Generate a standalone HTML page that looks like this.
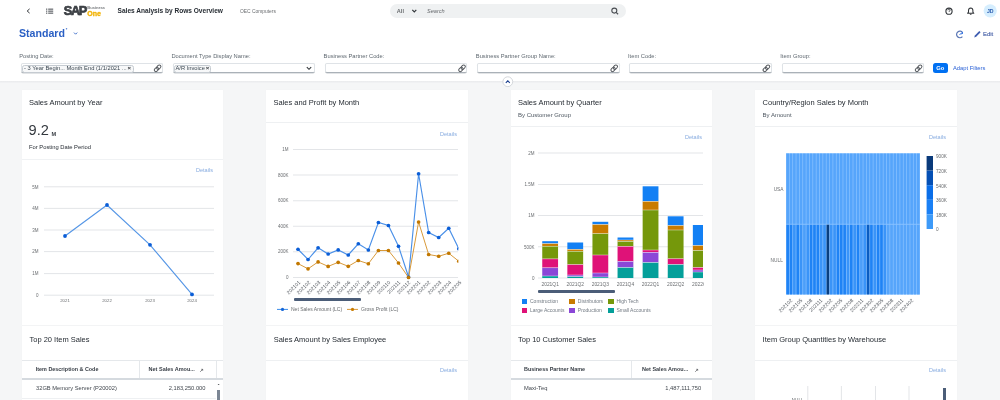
<!DOCTYPE html><html><head><meta charset="utf-8"><style>
html,body{margin:0;padding:0;width:1000px;height:400px;overflow:hidden;background:#f5f6f7;font-family:"Liberation Sans",sans-serif;}
.t{position:absolute;line-height:1;white-space:nowrap;}
svg{position:absolute;left:0;top:0;overflow:visible}
#w{position:absolute;left:0;top:0;width:1000px;height:400px;overflow:hidden;filter:blur(0.45px);background:#f5f6f7}
</style></head><body><div id="w">
<div style="position:absolute;left:0.00px;top:0.00px;width:1000.00px;height:80.50px;background:#fff"></div>
<div style="position:absolute;left:0.00px;top:80.50px;width:1000.00px;height:2.00px;background:linear-gradient(#e9eaec,#f2f3f5)"></div>
<svg width="1000" height="400">
<path d="M29.6 8.9 L27.2 11 L29.6 13.1" fill="none" stroke="#32363a" stroke-width="1.0"/>
<rect x="46" y="8.6" width="1.3" height="1.1" fill="#55595e"/>
<rect x="46" y="10.6" width="1.3" height="1.1" fill="#55595e"/>
<rect x="46" y="12.6" width="1.3" height="1.1" fill="#55595e"/>
<rect x="48.2" y="8.6" width="5" height="1.1" fill="#55595e"/>
<rect x="48.2" y="10.6" width="5" height="1.1" fill="#55595e"/>
<rect x="48.2" y="12.6" width="5" height="1.1" fill="#55595e"/>
</svg>
<div class="t" style="left:63.80px;top:5.24px;font-size:12.8px;color:#3d4146;font-weight:700;letter-spacing:-1.4px;-webkit-text-stroke:0.7px #3d4146;">SAP</div>
<div class="t" style="left:87.30px;top:6.07px;font-size:4.1px;color:#7a7d80;font-weight:700;letter-spacing:-0.05px;">Business</div>
<div class="t" style="left:87.20px;top:9.86px;font-size:7.0px;color:#f2b200;font-weight:700;-webkit-text-stroke:0.3px #f2b200;">One</div>
<div class="t" style="left:117.60px;top:8.39px;font-size:6.55px;color:#262c33;font-weight:700;">Sales Analysis by Rows Overview</div>
<div class="t" style="left:240.00px;top:10.05px;font-size:4.9px;color:#6a6d70;font-weight:400;">OEC Computers</div>
<div style="position:absolute;left:390.40px;top:3.60px;width:235.20px;height:14.60px;background:#eff1f2;border-radius:8px"></div>
<div class="t" style="left:396.80px;top:8.99px;font-size:5.6px;color:#6a6d70;font-weight:700;">All</div>
<svg width="1000" height="400"><path d="M412.3 9.9 L414.3 11.9 L416.3 9.9" fill="none" stroke="#32363a" stroke-width="1.2"/></svg>
<div class="t" style="left:427.00px;top:9.09px;font-size:5.6px;color:#6a6d70;font-weight:400;font-style:italic;">Search</div>
<svg width="1000" height="400"><circle cx="614.3" cy="10.6" r="2.5" fill="none" stroke="#4a4e53" stroke-width="1.1"/><path d="M616.1 12.4 L618.1 14.3" stroke="#4a4e53" stroke-width="1.2"/></svg>
<svg width="1000" height="400">
<circle cx="949" cy="11.2" r="3.1" fill="none" stroke="#32363a" stroke-width="1.1"/>
<path d="M947.9 10.3 Q948 9.1 949.1 9.1 Q950.2 9.2 950.1 10.2 Q950 11 949.1 11.4 L949.1 12" fill="none" stroke="#32363a" stroke-width="0.8"/>
<path d="M967.6 13.3 L968.5 12.2 L968.5 10.6 Q968.6 8 970.7 7.9 Q972.8 8 972.9 10.6 L972.9 12.2 L973.8 13.3 Z" fill="none" stroke="#32363a" stroke-width="1.05" stroke-linejoin="round"/><path d="M969.9 14.3 L971.5 14.3" stroke="#32363a" stroke-width="0.9"/>
<circle cx="990.2" cy="10.8" r="6.6" fill="#d6eefe"/>
</svg>
<div class="t" style="left:890.30px;width:200px;text-align:center;top:8.90px;font-size:5.2px;color:#2a5cb0;font-weight:700;">JD</div>
<div class="t" style="left:19.00px;top:28.49px;font-size:10.6px;color:#2a5fc4;font-weight:700;">Standard</div>
<div class="t" style="left:65.80px;top:28.12px;font-size:4px;color:#2a5fc4;font-weight:700;">*</div>
<svg width="1000" height="400"><path d="M74 32.6 L75.6 34.2 L77.2 32.6" fill="none" stroke="#2a5fc4" stroke-width="0.9"/></svg>
<svg width="1000" height="400">
<path d="M962.4 36.6 A3.3 3.3 0 1 1 962.6 32.6" fill="none" stroke="#5a76b4" stroke-width="1.2"/>
<path d="M959.6 35 Q960.2 33 962.8 33 M961.6 31.8 L963 33 L961.6 34.2" fill="none" stroke="#2f6fe0" stroke-width="0.9"/>
<path d="M974.2 37.4 L974.9 35.4 L979.3 31 L980.6 32.3 L976.2 36.7 Z" fill="#3d5cb0"/>
</svg>
<div class="t" style="left:983.00px;top:31.93px;font-size:5.9px;color:#5870b0;font-weight:400;-webkit-text-stroke:0.2px #5870b0;">Edit</div>
<div class="t" style="left:19.20px;top:54.01px;font-size:5.75px;color:#5f6870;font-weight:400;">Posting Date:</div>
<div style="position:absolute;left:20.60px;top:63.30px;width:142.40px;height:10.20px;background:#fff;border:0.6px solid #dfe3e7;border-bottom:1px solid #aab1b8;box-sizing:border-box;border-radius:2px;box-shadow:0 0.6px 0.6px #c5cace"></div>
<svg width="1000" height="400"><g fill="none" stroke="#55595e" stroke-width="1" transform="rotate(-45 157.6 68.3)"><rect x="153.6" y="66.7" width="4.8" height="3.2" rx="1.6"/><rect x="156.8" y="66.7" width="4.8" height="3.2" rx="1.6"/></g></svg>
<div class="t" style="left:171.40px;top:54.01px;font-size:5.75px;color:#5f6870;font-weight:400;">Document Type Display Name:</div>
<div style="position:absolute;left:172.80px;top:63.30px;width:142.40px;height:10.20px;background:#fff;border:0.6px solid #dfe3e7;border-bottom:1px solid #aab1b8;box-sizing:border-box;border-radius:2px;box-shadow:0 0.6px 0.6px #c5cace"></div>
<svg width="1000" height="400"><path d="M306.8 67.2 L309.0 69.3 L311.2 67.2" fill="none" stroke="#32363a" stroke-width="1.1"/></svg>
<div class="t" style="left:323.60px;top:54.01px;font-size:5.75px;color:#5f6870;font-weight:400;">Business Partner Code:</div>
<div style="position:absolute;left:325.00px;top:63.30px;width:142.40px;height:10.20px;background:#fff;border:0.6px solid #dfe3e7;border-bottom:1px solid #aab1b8;box-sizing:border-box;border-radius:2px;box-shadow:0 0.6px 0.6px #c5cace"></div>
<svg width="1000" height="400"><g fill="none" stroke="#55595e" stroke-width="1" transform="rotate(-45 462.0 68.3)"><rect x="458.0" y="66.7" width="4.8" height="3.2" rx="1.6"/><rect x="461.2" y="66.7" width="4.8" height="3.2" rx="1.6"/></g></svg>
<div class="t" style="left:475.80px;top:54.01px;font-size:5.75px;color:#5f6870;font-weight:400;">Business Partner Group Name:</div>
<div style="position:absolute;left:477.20px;top:63.30px;width:142.40px;height:10.20px;background:#fff;border:0.6px solid #dfe3e7;border-bottom:1px solid #aab1b8;box-sizing:border-box;border-radius:2px;box-shadow:0 0.6px 0.6px #c5cace"></div>
<svg width="1000" height="400"><g fill="none" stroke="#55595e" stroke-width="1" transform="rotate(-45 614.2 68.3)"><rect x="610.2" y="66.7" width="4.8" height="3.2" rx="1.6"/><rect x="613.4" y="66.7" width="4.8" height="3.2" rx="1.6"/></g></svg>
<div class="t" style="left:628.00px;top:54.01px;font-size:5.75px;color:#5f6870;font-weight:400;">Item Code:</div>
<div style="position:absolute;left:629.40px;top:63.30px;width:142.40px;height:10.20px;background:#fff;border:0.6px solid #dfe3e7;border-bottom:1px solid #aab1b8;box-sizing:border-box;border-radius:2px;box-shadow:0 0.6px 0.6px #c5cace"></div>
<svg width="1000" height="400"><g fill="none" stroke="#55595e" stroke-width="1" transform="rotate(-45 766.4 68.3)"><rect x="762.4" y="66.7" width="4.8" height="3.2" rx="1.6"/><rect x="765.6" y="66.7" width="4.8" height="3.2" rx="1.6"/></g></svg>
<div class="t" style="left:780.20px;top:54.01px;font-size:5.75px;color:#5f6870;font-weight:400;">Item Group:</div>
<div style="position:absolute;left:781.60px;top:63.30px;width:142.40px;height:10.20px;background:#fff;border:0.6px solid #dfe3e7;border-bottom:1px solid #aab1b8;box-sizing:border-box;border-radius:2px;box-shadow:0 0.6px 0.6px #c5cace"></div>
<svg width="1000" height="400"><g fill="none" stroke="#55595e" stroke-width="1" transform="rotate(-45 918.6 68.3)"><rect x="914.6" y="66.7" width="4.8" height="3.2" rx="1.6"/><rect x="917.8" y="66.7" width="4.8" height="3.2" rx="1.6"/></g></svg>
<div style="position:absolute;left:22.20px;top:64.60px;width:112.00px;height:8.00px;background:#f7f8f9;border:0.7px solid #c5cbd1;box-sizing:border-box;border-radius:2.5px"></div>
<div class="t" style="left:24.00px;top:65.61px;font-size:5.75px;color:#3b4650;font-weight:400;">- 3 Year Begin... Month End (1/1/2021 ...</div>
<div class="t" style="left:29.30px;width:200px;text-align:center;top:65.38px;font-size:6px;color:#32363a;font-weight:700;">×</div>
<div style="position:absolute;left:174.20px;top:64.60px;width:37.30px;height:8.00px;background:#f7f8f9;border:0.7px solid #c5cbd1;box-sizing:border-box;border-radius:2.5px"></div>
<div class="t" style="left:175.50px;top:65.61px;font-size:5.75px;color:#3b4650;font-weight:400;">A/R Invoice</div>
<div class="t" style="left:107.60px;width:200px;text-align:center;top:65.38px;font-size:6px;color:#32363a;font-weight:700;">×</div>
<div style="position:absolute;left:933.00px;top:63.20px;width:14.60px;height:10.20px;background:#0070f2;border-radius:2.5px"></div>
<div class="t" style="left:840.30px;width:200px;text-align:center;top:65.98px;font-size:5.8px;color:#fff;font-weight:700;">Go</div>
<div class="t" style="left:953.00px;top:66.00px;font-size:5.77px;color:#2b62d6;font-weight:400;">Adapt Filters</div>
<svg width="1000" height="400"><circle cx="507.8" cy="81.7" r="4.9" fill="#fff" stroke="#cfd3d7" stroke-width="0.9"/><path d="M505.8 82.8 L507.8 80.8 L509.8 82.8" fill="none" stroke="#1b3f8f" stroke-width="1.1"/></svg>
<div style="position:absolute;left:22.00px;top:90.00px;width:201.00px;height:234.60px;background:#fff;box-shadow:0 0 0.6px rgba(0,0,0,0.10)"></div>
<div style="position:absolute;left:22.00px;top:326.30px;width:201.00px;height:93.70px;background:#fff;box-shadow:0 0 0.6px rgba(0,0,0,0.10)"></div>
<div style="position:absolute;left:266.00px;top:90.00px;width:202.00px;height:234.60px;background:#fff;box-shadow:0 0 0.6px rgba(0,0,0,0.10)"></div>
<div style="position:absolute;left:266.00px;top:326.30px;width:202.00px;height:93.70px;background:#fff;box-shadow:0 0 0.6px rgba(0,0,0,0.10)"></div>
<div style="position:absolute;left:511.00px;top:90.00px;width:201.00px;height:234.60px;background:#fff;box-shadow:0 0 0.6px rgba(0,0,0,0.10)"></div>
<div style="position:absolute;left:511.00px;top:326.30px;width:201.00px;height:93.70px;background:#fff;box-shadow:0 0 0.6px rgba(0,0,0,0.10)"></div>
<div style="position:absolute;left:755.00px;top:90.00px;width:202.00px;height:234.60px;background:#fff;box-shadow:0 0 0.6px rgba(0,0,0,0.10)"></div>
<div style="position:absolute;left:755.00px;top:326.30px;width:202.00px;height:93.70px;background:#fff;box-shadow:0 0 0.6px rgba(0,0,0,0.10)"></div>
<div class="t" style="left:29.00px;top:99.40px;font-size:7.5px;color:#262c33;font-weight:400;">Sales Amount by Year</div>
<div class="t" style="left:28.60px;top:123.31px;font-size:14.6px;color:#33383e;font-weight:400;">9.2</div>
<div class="t" style="left:51.40px;top:132.09px;font-size:5.6px;color:#3a3f45;font-weight:700;">M</div>
<div class="t" style="left:29.00px;top:144.98px;font-size:5.8px;color:#262c33;font-weight:400;">For Posting Date Period</div>
<div style="position:absolute;left:22.00px;top:159.20px;width:201.00px;height:1.00px;background:#f0f2f4"></div>
<div class="t" style="right:787.00px;top:168.09px;font-size:5.6px;color:#88ace0;font-weight:400;">Details</div>
<svg width="1000" height="400"><line x1="44" y1="186.8" x2="214" y2="186.8" stroke="#e2e4e7" stroke-width="0.95"/><line x1="44" y1="208.4" x2="214" y2="208.4" stroke="#e2e4e7" stroke-width="0.95"/><line x1="44" y1="230" x2="214" y2="230" stroke="#e2e4e7" stroke-width="0.95"/><line x1="44" y1="251.6" x2="214" y2="251.6" stroke="#e2e4e7" stroke-width="0.95"/><line x1="44" y1="273.6" x2="214" y2="273.6" stroke="#e2e4e7" stroke-width="0.95"/><line x1="44" y1="295.2" x2="214" y2="295.2" stroke="#e2e4e7" stroke-width="0.95"/></svg>
<div class="t" style="right:961.50px;top:185.66px;font-size:4.5px;color:#6a6d70;font-weight:400;">5M</div>
<div class="t" style="right:961.50px;top:207.26px;font-size:4.5px;color:#6a6d70;font-weight:400;">4M</div>
<div class="t" style="right:961.50px;top:228.86px;font-size:4.5px;color:#6a6d70;font-weight:400;">3M</div>
<div class="t" style="right:961.50px;top:250.46px;font-size:4.5px;color:#6a6d70;font-weight:400;">2M</div>
<div class="t" style="right:961.50px;top:272.46px;font-size:4.5px;color:#6a6d70;font-weight:400;">1M</div>
<div class="t" style="right:961.50px;top:294.06px;font-size:4.5px;color:#6a6d70;font-weight:400;">0</div>
<div class="t" style="left:-35.00px;width:200px;text-align:center;top:298.56px;font-size:4.3px;color:#6a6d70;font-weight:400;">2021</div>
<div class="t" style="left:7.00px;width:200px;text-align:center;top:298.56px;font-size:4.3px;color:#6a6d70;font-weight:400;">2022</div>
<div class="t" style="left:50.00px;width:200px;text-align:center;top:298.56px;font-size:4.3px;color:#6a6d70;font-weight:400;">2023</div>
<div class="t" style="left:92.00px;width:200px;text-align:center;top:298.56px;font-size:4.3px;color:#6a6d70;font-weight:400;">2024</div>
<svg width="1000" height="400"><polyline points="65,236 107,205 150,244.8 192,294.4" fill="none" stroke="#5596e6" stroke-width="1.15"/><circle cx="65" cy="236" r="1.9" fill="#0b5ed7"/><circle cx="107" cy="205" r="1.9" fill="#0b5ed7"/><circle cx="150" cy="244.8" r="1.9" fill="#0b5ed7"/><circle cx="192" cy="294.4" r="1.9" fill="#0b5ed7"/></svg>
<div class="t" style="left:273.40px;top:99.10px;font-size:7.5px;color:#262c33;font-weight:400;">Sales and Profit by Month</div>
<div style="position:absolute;left:266.00px;top:121.80px;width:202.00px;height:1.00px;background:#eef0f2"></div>
<div class="t" style="right:543.00px;top:132.09px;font-size:5.6px;color:#88ace0;font-weight:400;">Details</div>
<svg width="1000" height="400"><line x1="293" y1="149.5" x2="458" y2="149.5" stroke="#e2e4e7" stroke-width="0.95"/><line x1="293" y1="175" x2="458" y2="175" stroke="#e2e4e7" stroke-width="0.95"/><line x1="293" y1="200.75" x2="458" y2="200.75" stroke="#e2e4e7" stroke-width="0.95"/><line x1="293" y1="226.25" x2="458" y2="226.25" stroke="#e2e4e7" stroke-width="0.95"/><line x1="293" y1="251.75" x2="458" y2="251.75" stroke="#e2e4e7" stroke-width="0.95"/><line x1="293" y1="277.5" x2="458" y2="277.5" stroke="#e2e4e7" stroke-width="0.95"/></svg>
<div class="t" style="right:711.50px;top:148.16px;font-size:4.5px;color:#6a6d70;font-weight:400;">1M</div>
<div class="t" style="right:711.50px;top:173.66px;font-size:4.5px;color:#6a6d70;font-weight:400;">800K</div>
<div class="t" style="right:711.50px;top:199.41px;font-size:4.5px;color:#6a6d70;font-weight:400;">600K</div>
<div class="t" style="right:711.50px;top:224.91px;font-size:4.5px;color:#6a6d70;font-weight:400;">400K</div>
<div class="t" style="right:711.50px;top:250.41px;font-size:4.5px;color:#6a6d70;font-weight:400;">200K</div>
<div class="t" style="right:711.50px;top:276.16px;font-size:4.5px;color:#6a6d70;font-weight:400;">0</div>
<svg width="1000" height="400"><defs><clipPath id="c2"><rect x="266" y="140" width="192.3" height="150"/></clipPath></defs><g clip-path="url(#c2)"><polyline points="298.00,249.25 308.05,259.5 318.10,247.8 328.15,254 338.20,249.9 348.25,255 358.30,243.75 368.35,250 378.40,222.5 388.45,225.5 398.50,246.25 408.55,277 418.60,173.75 428.65,232.5 438.70,237.5 448.75,228.25 458.80,248.75" fill="none" stroke="#4a90e8" stroke-width="1.15"/><polyline points="298.00,263.6 308.05,268.8 318.10,261.9 328.15,266.4 338.20,262.3 348.25,266.3 358.30,260.5 368.35,263.75 378.40,250.5 388.45,250.5 398.50,263 408.55,277.5 418.60,222 428.65,254.5 438.70,256.25 448.75,253.25 458.80,261.25" fill="none" stroke="#d99a3a" stroke-width="1"/><circle cx="298.00" cy="249.25" r="1.85" fill="#0b5ed7"/><circle cx="308.05" cy="259.5" r="1.85" fill="#0b5ed7"/><circle cx="318.10" cy="247.8" r="1.85" fill="#0b5ed7"/><circle cx="328.15" cy="254" r="1.85" fill="#0b5ed7"/><circle cx="338.20" cy="249.9" r="1.85" fill="#0b5ed7"/><circle cx="348.25" cy="255" r="1.85" fill="#0b5ed7"/><circle cx="358.30" cy="243.75" r="1.85" fill="#0b5ed7"/><circle cx="368.35" cy="250" r="1.85" fill="#0b5ed7"/><circle cx="378.40" cy="222.5" r="1.85" fill="#0b5ed7"/><circle cx="388.45" cy="225.5" r="1.85" fill="#0b5ed7"/><circle cx="398.50" cy="246.25" r="1.85" fill="#0b5ed7"/><circle cx="408.55" cy="277" r="1.85" fill="#0b5ed7"/><circle cx="418.60" cy="173.75" r="1.85" fill="#0b5ed7"/><circle cx="428.65" cy="232.5" r="1.85" fill="#0b5ed7"/><circle cx="438.70" cy="237.5" r="1.85" fill="#0b5ed7"/><circle cx="448.75" cy="228.25" r="1.85" fill="#0b5ed7"/><circle cx="458.80" cy="248.75" r="1.85" fill="#0b5ed7"/><circle cx="298.00" cy="263.6" r="1.85" fill="#c27800"/><circle cx="308.05" cy="268.8" r="1.85" fill="#c27800"/><circle cx="318.10" cy="261.9" r="1.85" fill="#c27800"/><circle cx="328.15" cy="266.4" r="1.85" fill="#c27800"/><circle cx="338.20" cy="262.3" r="1.85" fill="#c27800"/><circle cx="348.25" cy="266.3" r="1.85" fill="#c27800"/><circle cx="358.30" cy="260.5" r="1.85" fill="#c27800"/><circle cx="368.35" cy="263.75" r="1.85" fill="#c27800"/><circle cx="378.40" cy="250.5" r="1.85" fill="#c27800"/><circle cx="388.45" cy="250.5" r="1.85" fill="#c27800"/><circle cx="398.50" cy="263" r="1.85" fill="#c27800"/><circle cx="408.55" cy="277.5" r="1.85" fill="#c27800"/><circle cx="418.60" cy="222" r="1.85" fill="#c27800"/><circle cx="428.65" cy="254.5" r="1.85" fill="#c27800"/><circle cx="438.70" cy="256.25" r="1.85" fill="#c27800"/><circle cx="448.75" cy="253.25" r="1.85" fill="#c27800"/><circle cx="458.80" cy="261.25" r="1.85" fill="#c27800"/></g></svg>
<div class="t" style="left:267.80px;top:280.00px;width:30px;text-align:right;font-size:5.1px;color:#5a5f66;transform-origin:100% 0;transform:rotate(-45deg)">202101</div>
<div class="t" style="left:277.85px;top:280.00px;width:30px;text-align:right;font-size:5.1px;color:#5a5f66;transform-origin:100% 0;transform:rotate(-45deg)">202102</div>
<div class="t" style="left:287.90px;top:280.00px;width:30px;text-align:right;font-size:5.1px;color:#5a5f66;transform-origin:100% 0;transform:rotate(-45deg)">202103</div>
<div class="t" style="left:297.95px;top:280.00px;width:30px;text-align:right;font-size:5.1px;color:#5a5f66;transform-origin:100% 0;transform:rotate(-45deg)">202104</div>
<div class="t" style="left:308.00px;top:280.00px;width:30px;text-align:right;font-size:5.1px;color:#5a5f66;transform-origin:100% 0;transform:rotate(-45deg)">202105</div>
<div class="t" style="left:318.05px;top:280.00px;width:30px;text-align:right;font-size:5.1px;color:#5a5f66;transform-origin:100% 0;transform:rotate(-45deg)">202106</div>
<div class="t" style="left:328.10px;top:280.00px;width:30px;text-align:right;font-size:5.1px;color:#5a5f66;transform-origin:100% 0;transform:rotate(-45deg)">202107</div>
<div class="t" style="left:338.15px;top:280.00px;width:30px;text-align:right;font-size:5.1px;color:#5a5f66;transform-origin:100% 0;transform:rotate(-45deg)">202108</div>
<div class="t" style="left:348.20px;top:280.00px;width:30px;text-align:right;font-size:5.1px;color:#5a5f66;transform-origin:100% 0;transform:rotate(-45deg)">202109</div>
<div class="t" style="left:358.25px;top:280.00px;width:30px;text-align:right;font-size:5.1px;color:#5a5f66;transform-origin:100% 0;transform:rotate(-45deg)">202110</div>
<div class="t" style="left:368.30px;top:280.00px;width:30px;text-align:right;font-size:5.1px;color:#5a5f66;transform-origin:100% 0;transform:rotate(-45deg)">202111</div>
<div class="t" style="left:378.35px;top:280.00px;width:30px;text-align:right;font-size:5.1px;color:#5a5f66;transform-origin:100% 0;transform:rotate(-45deg)">202112</div>
<div class="t" style="left:388.40px;top:280.00px;width:30px;text-align:right;font-size:5.1px;color:#5a5f66;transform-origin:100% 0;transform:rotate(-45deg)">202201</div>
<div class="t" style="left:398.45px;top:280.00px;width:30px;text-align:right;font-size:5.1px;color:#5a5f66;transform-origin:100% 0;transform:rotate(-45deg)">202202</div>
<div class="t" style="left:408.50px;top:280.00px;width:30px;text-align:right;font-size:5.1px;color:#5a5f66;transform-origin:100% 0;transform:rotate(-45deg)">202203</div>
<div class="t" style="left:418.55px;top:280.00px;width:30px;text-align:right;font-size:5.1px;color:#5a5f66;transform-origin:100% 0;transform:rotate(-45deg)">202204</div>
<div class="t" style="left:428.60px;top:280.00px;width:30px;text-align:right;font-size:5.1px;color:#5a5f66;transform-origin:100% 0;transform:rotate(-45deg)">202205</div>
<div style="position:absolute;left:294.30px;top:298.20px;width:67.10px;height:2.60px;background:#4b5d78;border-radius:1px"></div>
<svg width="1000" height="400">
<line x1="277" y1="309.4" x2="288" y2="309.4" stroke="#3b8be8" stroke-width="1"/><circle cx="282.5" cy="309.4" r="1.6" fill="#1466d8"/>
<line x1="347" y1="309.4" x2="358" y2="309.4" stroke="#d99a3a" stroke-width="1"/><circle cx="352.5" cy="309.4" r="1.6" fill="#c87b00"/>
</svg>
<div class="t" style="left:291.00px;top:306.80px;font-size:5.0px;color:#6a6d70;font-weight:400;">Net Sales Amount (LC)</div>
<div class="t" style="left:361.00px;top:306.80px;font-size:5.0px;color:#6a6d70;font-weight:400;">Gross Profit (LC)</div>
<div class="t" style="left:518.00px;top:99.10px;font-size:7.5px;color:#262c33;font-weight:400;">Sales Amount by Quarter</div>
<div class="t" style="left:518.00px;top:112.48px;font-size:6.0px;color:#4f5862;font-weight:400;">By Customer Group</div>
<div style="position:absolute;left:511.00px;top:125.60px;width:201.00px;height:1.00px;background:#eef0f2"></div>
<div class="t" style="right:298.00px;top:135.09px;font-size:5.6px;color:#88ace0;font-weight:400;">Details</div>
<svg width="1000" height="400"><line x1="538" y1="153" x2="703" y2="153" stroke="#e2e4e7" stroke-width="0.95"/><line x1="538" y1="184.5" x2="703" y2="184.5" stroke="#e2e4e7" stroke-width="0.95"/><line x1="538" y1="215.5" x2="703" y2="215.5" stroke="#e2e4e7" stroke-width="0.95"/><line x1="538" y1="246.75" x2="703" y2="246.75" stroke="#e2e4e7" stroke-width="0.95"/><line x1="538" y1="278" x2="703" y2="278" stroke="#e2e4e7" stroke-width="0.95"/></svg>
<div class="t" style="right:465.50px;top:151.86px;font-size:4.5px;color:#6a6d70;font-weight:400;">2M</div>
<div class="t" style="right:465.50px;top:183.36px;font-size:4.5px;color:#6a6d70;font-weight:400;">1.5M</div>
<div class="t" style="right:465.50px;top:214.36px;font-size:4.5px;color:#6a6d70;font-weight:400;">1M</div>
<div class="t" style="right:465.50px;top:245.61px;font-size:4.5px;color:#6a6d70;font-weight:400;">500K</div>
<div class="t" style="right:465.50px;top:276.86px;font-size:4.5px;color:#6a6d70;font-weight:400;">0</div>
<svg width="1000" height="400"><defs><clipPath id="c3"><rect x="511" y="140" width="192" height="150"/></clipPath></defs><g clip-path="url(#c3)"><rect x="542.25" y="241.2" width="15.8" height="2.40" fill="#1380f4"/><rect x="542.25" y="243.6" width="15.8" height="2.60" fill="#c87b00"/><rect x="542.25" y="246.2" width="15.8" height="12.70" fill="#75980b"/><rect x="542.25" y="258.9" width="15.8" height="8.90" fill="#df1278"/><rect x="542.25" y="267.8" width="15.8" height="8.20" fill="#8b47d7"/><rect x="542.25" y="276" width="15.8" height="2.00" fill="#049f9a"/><rect x="542.25" y="243.35" width="15.8" height="0.5" fill="#fff" opacity="0.8"/><rect x="542.25" y="245.95" width="15.8" height="0.5" fill="#fff" opacity="0.8"/><rect x="542.25" y="258.65" width="15.8" height="0.5" fill="#fff" opacity="0.8"/><rect x="542.25" y="267.55" width="15.8" height="0.5" fill="#fff" opacity="0.8"/><rect x="542.25" y="275.75" width="15.8" height="0.5" fill="#fff" opacity="0.8"/><rect x="567.35" y="242.5" width="15.8" height="6.80" fill="#1380f4"/><rect x="567.35" y="249.3" width="15.8" height="1.90" fill="#c87b00"/><rect x="567.35" y="251.2" width="15.8" height="13.40" fill="#75980b"/><rect x="567.35" y="264.6" width="15.8" height="10.40" fill="#df1278"/><rect x="567.35" y="275" width="15.8" height="1.60" fill="#8b47d7"/><rect x="567.35" y="276.6" width="15.8" height="1.40" fill="#049f9a"/><rect x="567.35" y="249.05" width="15.8" height="0.5" fill="#fff" opacity="0.8"/><rect x="567.35" y="250.95" width="15.8" height="0.5" fill="#fff" opacity="0.8"/><rect x="567.35" y="264.35" width="15.8" height="0.5" fill="#fff" opacity="0.8"/><rect x="567.35" y="274.75" width="15.8" height="0.5" fill="#fff" opacity="0.8"/><rect x="567.35" y="276.35" width="15.8" height="0.5" fill="#fff" opacity="0.8"/><rect x="592.45" y="221.8" width="15.8" height="2.70" fill="#1380f4"/><rect x="592.45" y="224.5" width="15.8" height="9.20" fill="#c87b00"/><rect x="592.45" y="233.7" width="15.8" height="21.30" fill="#75980b"/><rect x="592.45" y="255" width="15.8" height="18.00" fill="#df1278"/><rect x="592.45" y="273" width="15.8" height="4.00" fill="#8b47d7"/><rect x="592.45" y="277" width="15.8" height="1.00" fill="#049f9a"/><rect x="592.45" y="224.25" width="15.8" height="0.5" fill="#fff" opacity="0.8"/><rect x="592.45" y="233.45" width="15.8" height="0.5" fill="#fff" opacity="0.8"/><rect x="592.45" y="254.75" width="15.8" height="0.5" fill="#fff" opacity="0.8"/><rect x="592.45" y="272.75" width="15.8" height="0.5" fill="#fff" opacity="0.8"/><rect x="592.45" y="276.75" width="15.8" height="0.5" fill="#fff" opacity="0.8"/><rect x="617.55" y="237.5" width="15.8" height="2.50" fill="#1380f4"/><rect x="617.55" y="240" width="15.8" height="1.30" fill="#c87b00"/><rect x="617.55" y="241.3" width="15.8" height="5.00" fill="#75980b"/><rect x="617.55" y="246.3" width="15.8" height="15.00" fill="#df1278"/><rect x="617.55" y="261.3" width="15.8" height="6.20" fill="#8b47d7"/><rect x="617.55" y="267.5" width="15.8" height="10.50" fill="#049f9a"/><rect x="617.55" y="239.75" width="15.8" height="0.5" fill="#fff" opacity="0.8"/><rect x="617.55" y="241.05" width="15.8" height="0.5" fill="#fff" opacity="0.8"/><rect x="617.55" y="246.05" width="15.8" height="0.5" fill="#fff" opacity="0.8"/><rect x="617.55" y="261.05" width="15.8" height="0.5" fill="#fff" opacity="0.8"/><rect x="617.55" y="267.25" width="15.8" height="0.5" fill="#fff" opacity="0.8"/><rect x="642.65" y="186.3" width="15.8" height="15.00" fill="#1380f4"/><rect x="642.65" y="201.3" width="15.8" height="8.70" fill="#c87b00"/><rect x="642.65" y="210" width="15.8" height="40.00" fill="#75980b"/><rect x="642.65" y="250" width="15.8" height="2.30" fill="#df1278"/><rect x="642.65" y="252.3" width="15.8" height="10.20" fill="#8b47d7"/><rect x="642.65" y="262.5" width="15.8" height="15.50" fill="#049f9a"/><rect x="642.65" y="201.05" width="15.8" height="0.5" fill="#fff" opacity="0.8"/><rect x="642.65" y="209.75" width="15.8" height="0.5" fill="#fff" opacity="0.8"/><rect x="642.65" y="249.75" width="15.8" height="0.5" fill="#fff" opacity="0.8"/><rect x="642.65" y="252.05" width="15.8" height="0.5" fill="#fff" opacity="0.8"/><rect x="642.65" y="262.25" width="15.8" height="0.5" fill="#fff" opacity="0.8"/><rect x="667.75" y="216.3" width="15.8" height="9.20" fill="#1380f4"/><rect x="667.75" y="225.5" width="15.8" height="4.50" fill="#c87b00"/><rect x="667.75" y="230" width="15.8" height="28.80" fill="#75980b"/><rect x="667.75" y="258.8" width="15.8" height="5.70" fill="#df1278"/><rect x="667.75" y="264.5" width="15.8" height="13.50" fill="#049f9a"/><rect x="667.75" y="225.25" width="15.8" height="0.5" fill="#fff" opacity="0.8"/><rect x="667.75" y="229.75" width="15.8" height="0.5" fill="#fff" opacity="0.8"/><rect x="667.75" y="258.55" width="15.8" height="0.5" fill="#fff" opacity="0.8"/><rect x="667.75" y="264.25" width="15.8" height="0.5" fill="#fff" opacity="0.8"/><rect x="692.85" y="225" width="15.8" height="20.50" fill="#1380f4"/><rect x="692.85" y="245.5" width="15.8" height="5.00" fill="#c87b00"/><rect x="692.85" y="250.5" width="15.8" height="17.00" fill="#75980b"/><rect x="692.85" y="267.5" width="15.8" height="2.50" fill="#df1278"/><rect x="692.85" y="270" width="15.8" height="2.00" fill="#8b47d7"/><rect x="692.85" y="272" width="15.8" height="6.00" fill="#049f9a"/><rect x="692.85" y="245.25" width="15.8" height="0.5" fill="#fff" opacity="0.8"/><rect x="692.85" y="250.25" width="15.8" height="0.5" fill="#fff" opacity="0.8"/><rect x="692.85" y="267.25" width="15.8" height="0.5" fill="#fff" opacity="0.8"/><rect x="692.85" y="269.75" width="15.8" height="0.5" fill="#fff" opacity="0.8"/><rect x="692.85" y="271.75" width="15.8" height="0.5" fill="#fff" opacity="0.8"/></g></svg>
<div style="position:absolute;left:511px;top:279px;width:192.5px;height:10px;overflow:hidden">
<div class="t" style="left:-60.85px;width:200px;text-align:center;top:3.85px;font-size:4.9px;color:#6a6d70;">2021Q1</div>
<div class="t" style="left:-35.75px;width:200px;text-align:center;top:3.85px;font-size:4.9px;color:#6a6d70;">2021Q2</div>
<div class="t" style="left:-10.65px;width:200px;text-align:center;top:3.85px;font-size:4.9px;color:#6a6d70;">2021Q3</div>
<div class="t" style="left:14.45px;width:200px;text-align:center;top:3.85px;font-size:4.9px;color:#6a6d70;">2021Q4</div>
<div class="t" style="left:39.55px;width:200px;text-align:center;top:3.85px;font-size:4.9px;color:#6a6d70;">2022Q1</div>
<div class="t" style="left:64.65px;width:200px;text-align:center;top:3.85px;font-size:4.9px;color:#6a6d70;">2022Q2</div>
<div class="t" style="left:89.75px;width:200px;text-align:center;top:3.85px;font-size:4.9px;color:#6a6d70;">2022Q3</div>
</div>
<div style="position:absolute;left:538.30px;top:290.30px;width:77.20px;height:2.50px;background:#4b5d78;border-radius:1px"></div>
<div style="position:absolute;left:521.50px;top:298.80px;width:5.50px;height:5.60px;background:#1380f4"></div>
<div class="t" style="left:530.00px;top:299.00px;font-size:5.0px;color:#737b84;font-weight:400;">Construction</div>
<div style="position:absolute;left:569.30px;top:298.80px;width:5.50px;height:5.60px;background:#c87b00"></div>
<div class="t" style="left:577.80px;top:299.00px;font-size:5.0px;color:#737b84;font-weight:400;">Distributors</div>
<div style="position:absolute;left:608.00px;top:298.80px;width:5.50px;height:5.60px;background:#75980b"></div>
<div class="t" style="left:616.50px;top:299.00px;font-size:5.0px;color:#737b84;font-weight:400;">High Tech</div>
<div style="position:absolute;left:521.50px;top:307.80px;width:5.50px;height:5.60px;background:#df1278"></div>
<div class="t" style="left:530.00px;top:308.00px;font-size:5.0px;color:#737b84;font-weight:400;">Large Accounts</div>
<div style="position:absolute;left:569.30px;top:307.80px;width:5.50px;height:5.60px;background:#8b47d7"></div>
<div class="t" style="left:577.80px;top:308.00px;font-size:5.0px;color:#737b84;font-weight:400;">Production</div>
<div style="position:absolute;left:608.00px;top:307.80px;width:5.50px;height:5.60px;background:#049f9a"></div>
<div class="t" style="left:616.50px;top:308.00px;font-size:5.0px;color:#737b84;font-weight:400;">Small Accounts</div>
<div class="t" style="left:762.60px;top:99.10px;font-size:7.5px;color:#262c33;font-weight:400;">Country/Region Sales by Month</div>
<div class="t" style="left:762.60px;top:112.48px;font-size:6.0px;color:#4f5862;font-weight:400;">By Amount</div>
<div style="position:absolute;left:755.00px;top:125.60px;width:202.00px;height:1.00px;background:#eef0f2"></div>
<div class="t" style="right:54.00px;top:135.09px;font-size:5.6px;color:#88ace0;font-weight:400;">Details</div>
<svg width="1000" height="400"><rect x="786" y="153.25" width="134" height="141.25" fill="#8cc3ff"/><rect x="786.35" y="153.5" width="2.65" height="70.3" fill="#56a5fb"/><rect x="786.35" y="224.7" width="2.65" height="69.8" fill="#1f83f5"/><rect x="789.70" y="153.5" width="2.65" height="70.3" fill="#56a5fb"/><rect x="789.70" y="224.7" width="2.65" height="69.8" fill="#1f83f5"/><rect x="793.05" y="153.5" width="2.65" height="70.3" fill="#56a5fb"/><rect x="793.05" y="224.7" width="2.65" height="69.8" fill="#3a94f8"/><rect x="796.40" y="153.5" width="2.65" height="70.3" fill="#56a5fb"/><rect x="796.40" y="224.7" width="2.65" height="69.8" fill="#1f83f5"/><rect x="799.75" y="153.5" width="2.65" height="70.3" fill="#56a5fb"/><rect x="799.75" y="224.7" width="2.65" height="69.8" fill="#3a94f8"/><rect x="803.10" y="153.5" width="2.65" height="70.3" fill="#56a5fb"/><rect x="803.10" y="224.7" width="2.65" height="69.8" fill="#4c9ff9"/><rect x="806.45" y="153.5" width="2.65" height="70.3" fill="#56a5fb"/><rect x="806.45" y="224.7" width="2.65" height="69.8" fill="#3a94f8"/><rect x="809.80" y="153.5" width="2.65" height="70.3" fill="#56a5fb"/><rect x="809.80" y="224.7" width="2.65" height="69.8" fill="#1f83f5"/><rect x="813.15" y="153.5" width="2.65" height="70.3" fill="#56a5fb"/><rect x="813.15" y="224.7" width="2.65" height="69.8" fill="#1f83f5"/><rect x="816.50" y="153.5" width="2.65" height="70.3" fill="#56a5fb"/><rect x="816.50" y="224.7" width="2.65" height="69.8" fill="#1f83f5"/><rect x="819.85" y="153.5" width="2.65" height="70.3" fill="#56a5fb"/><rect x="819.85" y="224.7" width="2.65" height="69.8" fill="#3a94f8"/><rect x="823.20" y="153.5" width="2.65" height="70.3" fill="#56a5fb"/><rect x="823.20" y="224.7" width="2.65" height="69.8" fill="#3a94f8"/><rect x="826.55" y="153.5" width="2.65" height="70.3" fill="#56a5fb"/><rect x="826.55" y="224.7" width="2.65" height="69.8" fill="#083e80"/><rect x="829.90" y="153.5" width="2.65" height="70.3" fill="#56a5fb"/><rect x="829.90" y="224.7" width="2.65" height="69.8" fill="#3a94f8"/><rect x="833.25" y="153.5" width="2.65" height="70.3" fill="#56a5fb"/><rect x="833.25" y="224.7" width="2.65" height="69.8" fill="#3a94f8"/><rect x="836.60" y="153.5" width="2.65" height="70.3" fill="#56a5fb"/><rect x="836.60" y="224.7" width="2.65" height="69.8" fill="#1f83f5"/><rect x="839.95" y="153.5" width="2.65" height="70.3" fill="#56a5fb"/><rect x="839.95" y="224.7" width="2.65" height="69.8" fill="#1f83f5"/><rect x="843.30" y="153.5" width="2.65" height="70.3" fill="#56a5fb"/><rect x="843.30" y="224.7" width="2.65" height="69.8" fill="#1f83f5"/><rect x="846.65" y="153.5" width="2.65" height="70.3" fill="#56a5fb"/><rect x="846.65" y="224.7" width="2.65" height="69.8" fill="#3a94f8"/><rect x="850.00" y="153.5" width="2.65" height="70.3" fill="#56a5fb"/><rect x="850.00" y="224.7" width="2.65" height="69.8" fill="#1f83f5"/><rect x="853.35" y="153.5" width="2.65" height="70.3" fill="#56a5fb"/><rect x="853.35" y="224.7" width="2.65" height="69.8" fill="#3a94f8"/><rect x="856.70" y="153.5" width="2.65" height="70.3" fill="#56a5fb"/><rect x="856.70" y="224.7" width="2.65" height="69.8" fill="#1f83f5"/><rect x="860.05" y="153.5" width="2.65" height="70.3" fill="#56a5fb"/><rect x="860.05" y="224.7" width="2.65" height="69.8" fill="#4c9ff9"/><rect x="863.40" y="153.5" width="2.65" height="70.3" fill="#56a5fb"/><rect x="863.40" y="224.7" width="2.65" height="69.8" fill="#3a94f8"/><rect x="866.75" y="153.5" width="2.65" height="70.3" fill="#56a5fb"/><rect x="866.75" y="224.7" width="2.65" height="69.8" fill="#0a5cc0"/><rect x="870.10" y="153.5" width="2.65" height="70.3" fill="#56a5fb"/><rect x="870.10" y="224.7" width="2.65" height="69.8" fill="#1f83f5"/><rect x="873.45" y="153.5" width="2.65" height="70.3" fill="#56a5fb"/><rect x="873.45" y="224.7" width="2.65" height="69.8" fill="#3a94f8"/><rect x="876.80" y="153.5" width="2.65" height="70.3" fill="#56a5fb"/><rect x="876.80" y="224.7" width="2.65" height="69.8" fill="#1f83f5"/><rect x="880.15" y="153.5" width="2.65" height="70.3" fill="#56a5fb"/><rect x="880.15" y="224.7" width="2.65" height="69.8" fill="#1f83f5"/><rect x="883.50" y="153.5" width="2.65" height="70.3" fill="#56a5fb"/><rect x="883.50" y="224.7" width="2.65" height="69.8" fill="#3a94f8"/><rect x="886.85" y="153.5" width="2.65" height="70.3" fill="#56a5fb"/><rect x="886.85" y="224.7" width="2.65" height="69.8" fill="#56a5fb"/><rect x="890.20" y="153.5" width="2.65" height="70.3" fill="#56a5fb"/><rect x="890.20" y="224.7" width="2.65" height="69.8" fill="#56a5fb"/><rect x="893.55" y="153.5" width="2.65" height="70.3" fill="#56a5fb"/><rect x="893.55" y="224.7" width="2.65" height="69.8" fill="#56a5fb"/><rect x="896.90" y="153.5" width="2.65" height="70.3" fill="#56a5fb"/><rect x="896.90" y="224.7" width="2.65" height="69.8" fill="#56a5fb"/><rect x="900.25" y="153.5" width="2.65" height="70.3" fill="#56a5fb"/><rect x="900.25" y="224.7" width="2.65" height="69.8" fill="#56a5fb"/><rect x="903.60" y="153.5" width="2.65" height="70.3" fill="#56a5fb"/><rect x="903.60" y="224.7" width="2.65" height="69.8" fill="#56a5fb"/><rect x="906.95" y="153.5" width="2.65" height="70.3" fill="#56a5fb"/><rect x="906.95" y="224.7" width="2.65" height="69.8" fill="#56a5fb"/><rect x="910.30" y="153.5" width="2.65" height="70.3" fill="#56a5fb"/><rect x="910.30" y="224.7" width="2.65" height="69.8" fill="#56a5fb"/><rect x="913.65" y="153.5" width="2.65" height="70.3" fill="#56a5fb"/><rect x="913.65" y="224.7" width="2.65" height="69.8" fill="#56a5fb"/><rect x="917.00" y="153.5" width="2.65" height="70.3" fill="#56a5fb"/><rect x="917.00" y="224.7" width="2.65" height="69.8" fill="#56a5fb"/><rect x="926.6" y="156.00" width="6.4" height="14.6" fill="#0a3a7a"/><rect x="926.6" y="170.60" width="6.4" height="14.6" fill="#0550b5"/><rect x="926.6" y="185.20" width="6.4" height="14.6" fill="#0a6ee8"/><rect x="926.6" y="199.80" width="6.4" height="14.6" fill="#1a80f5"/><rect x="926.6" y="214.40" width="6.4" height="14.6" fill="#3d9af8"/></svg>
<div class="t" style="left:936.00px;top:155.36px;font-size:4.7px;color:#6a6d70;font-weight:400;">900K</div>
<div class="t" style="left:936.00px;top:169.96px;font-size:4.7px;color:#6a6d70;font-weight:400;">720K</div>
<div class="t" style="left:936.00px;top:184.56px;font-size:4.7px;color:#6a6d70;font-weight:400;">540K</div>
<div class="t" style="left:936.00px;top:199.16px;font-size:4.7px;color:#6a6d70;font-weight:400;">360K</div>
<div class="t" style="left:936.00px;top:213.76px;font-size:4.7px;color:#6a6d70;font-weight:400;">180K</div>
<div class="t" style="left:936.00px;top:228.36px;font-size:4.7px;color:#6a6d70;font-weight:400;">0</div>
<div class="t" style="right:216.50px;top:187.90px;font-size:4.8px;color:#6a6d70;font-weight:400;">USA</div>
<div class="t" style="right:217.20px;top:259.10px;font-size:4.8px;color:#6a6d70;font-weight:400;">NULL</div>
<div class="t" style="left:762.23px;top:297.80px;width:28px;text-align:right;font-size:5.1px;color:#5a5f66;transform-origin:100% 0;transform:rotate(-45deg)">202102</div>
<div class="t" style="left:772.28px;top:297.80px;width:28px;text-align:right;font-size:5.1px;color:#5a5f66;transform-origin:100% 0;transform:rotate(-45deg)">202105</div>
<div class="t" style="left:782.33px;top:297.80px;width:28px;text-align:right;font-size:5.1px;color:#5a5f66;transform-origin:100% 0;transform:rotate(-45deg)">202108</div>
<div class="t" style="left:792.38px;top:297.80px;width:28px;text-align:right;font-size:5.1px;color:#5a5f66;transform-origin:100% 0;transform:rotate(-45deg)">202111</div>
<div class="t" style="left:802.43px;top:297.80px;width:28px;text-align:right;font-size:5.1px;color:#5a5f66;transform-origin:100% 0;transform:rotate(-45deg)">202202</div>
<div class="t" style="left:812.48px;top:297.80px;width:28px;text-align:right;font-size:5.1px;color:#5a5f66;transform-origin:100% 0;transform:rotate(-45deg)">202205</div>
<div class="t" style="left:822.53px;top:297.80px;width:28px;text-align:right;font-size:5.1px;color:#5a5f66;transform-origin:100% 0;transform:rotate(-45deg)">202208</div>
<div class="t" style="left:832.58px;top:297.80px;width:28px;text-align:right;font-size:5.1px;color:#5a5f66;transform-origin:100% 0;transform:rotate(-45deg)">202211</div>
<div class="t" style="left:842.62px;top:297.80px;width:28px;text-align:right;font-size:5.1px;color:#5a5f66;transform-origin:100% 0;transform:rotate(-45deg)">202302</div>
<div class="t" style="left:852.68px;top:297.80px;width:28px;text-align:right;font-size:5.1px;color:#5a5f66;transform-origin:100% 0;transform:rotate(-45deg)">202305</div>
<div class="t" style="left:862.73px;top:297.80px;width:28px;text-align:right;font-size:5.1px;color:#5a5f66;transform-origin:100% 0;transform:rotate(-45deg)">202308</div>
<div class="t" style="left:872.78px;top:297.80px;width:28px;text-align:right;font-size:5.1px;color:#5a5f66;transform-origin:100% 0;transform:rotate(-45deg)">202311</div>
<div class="t" style="left:882.83px;top:297.80px;width:28px;text-align:right;font-size:5.1px;color:#5a5f66;transform-origin:100% 0;transform:rotate(-45deg)">202402</div>
<div class="t" style="left:29.50px;top:336.10px;font-size:7.5px;color:#262c33;font-weight:400;">Top 20 Item Sales</div>
<div style="position:absolute;left:22.00px;top:359.60px;width:201.00px;height:0.80px;background:#e5e8eb"></div>
<div style="position:absolute;left:22.00px;top:378.40px;width:201.00px;height:1.20px;background:#d5dadf"></div>
<div style="position:absolute;left:138.50px;top:360.40px;width:0.70px;height:18.00px;background:#e5e8eb"></div>
<div style="position:absolute;left:216.20px;top:360.40px;width:0.70px;height:18.00px;background:#e5e8eb"></div>
<div class="t" style="left:35.80px;top:367.49px;font-size:5.4px;color:#3a4048;font-weight:700;">Item Description &amp; Code</div>
<div class="t" style="left:148.60px;top:367.44px;font-size:5.5px;color:#3a4048;font-weight:700;">Net Sales Amou...</div>
<svg width="1000" height="400"><path d="M200.2 371.8 L202.6 369.4 M201.2 369.3 L202.7 369.3 L202.7 370.8" fill="none" stroke="#32363a" stroke-width="0.6"/></svg>
<div class="t" style="left:36.00px;top:386.01px;font-size:5.75px;color:#40464d;font-weight:400;">32GB Memory Server (P20002)</div>
<div class="t" style="right:794.50px;top:386.01px;font-size:5.75px;color:#40464d;font-weight:400;">2,183,250.000</div>
<div style="position:absolute;left:22.00px;top:397.60px;width:194.00px;height:0.60px;background:#eef0f2"></div>
<svg width="1000" height="400"><path d="M217.6 385 L218.6 384 L219.6 385 Z" fill="#32363a"/></svg>
<div style="position:absolute;left:217.30px;top:389.50px;width:3.10px;height:10.50px;background:#7c8694"></div>
<div class="t" style="left:273.70px;top:336.10px;font-size:7.5px;color:#262c33;font-weight:400;">Sales Amount by Sales Employee</div>
<div style="position:absolute;left:266.00px;top:359.60px;width:202.00px;height:1.00px;background:#eef0f2"></div>
<div class="t" style="right:543.00px;top:368.09px;font-size:5.6px;color:#88ace0;font-weight:400;">Details</div>
<div class="t" style="left:518.00px;top:336.10px;font-size:7.5px;color:#262c33;font-weight:400;">Top 10 Customer Sales</div>
<div style="position:absolute;left:511.00px;top:359.60px;width:201.00px;height:0.80px;background:#e5e8eb"></div>
<div style="position:absolute;left:511.00px;top:378.40px;width:201.00px;height:1.20px;background:#d5dadf"></div>
<div style="position:absolute;left:631.40px;top:360.40px;width:0.70px;height:18.00px;background:#e5e8eb"></div>
<div class="t" style="left:524.00px;top:367.47px;font-size:5.45px;color:#3a4048;font-weight:700;">Business Partner Name</div>
<div class="t" style="left:642.00px;top:367.44px;font-size:5.5px;color:#3a4048;font-weight:700;">Net Sales Amou...</div>
<svg width="1000" height="400"><path d="M695.2 371.8 L697.6 369.4 M696.2 369.3 L697.7 369.3 L697.7 370.8" fill="none" stroke="#32363a" stroke-width="0.6"/></svg>
<div class="t" style="left:524.00px;top:386.01px;font-size:5.75px;color:#40464d;font-weight:400;">Maxi-Teq</div>
<div class="t" style="right:298.80px;top:386.01px;font-size:5.75px;color:#40464d;font-weight:400;">1,487,111,750</div>
<div class="t" style="left:762.60px;top:336.10px;font-size:7.5px;color:#262c33;font-weight:400;">Item Group Quantities by Warehouse</div>
<div style="position:absolute;left:755.00px;top:359.60px;width:202.00px;height:1.00px;background:#eef0f2"></div>
<div class="t" style="right:54.00px;top:368.09px;font-size:5.6px;color:#88ace0;font-weight:400;">Details</div>
<svg width="1000" height="400"><line x1="807.8" y1="386" x2="807.8" y2="400" stroke="#e2e4e7" stroke-width="0.95"/><line x1="841.4" y1="386" x2="841.4" y2="400" stroke="#e2e4e7" stroke-width="0.95"/><line x1="875.5" y1="386" x2="875.5" y2="400" stroke="#e2e4e7" stroke-width="0.95"/><line x1="909" y1="386" x2="909" y2="400" stroke="#e2e4e7" stroke-width="0.95"/><rect x="943" y="388" width="3" height="12" fill="#4b5d78"/></svg>
<div class="t" style="right:196.50px;top:398.61px;font-size:4.6px;color:#6a6d70;font-weight:400;">NULL</div>
</div></body></html>
